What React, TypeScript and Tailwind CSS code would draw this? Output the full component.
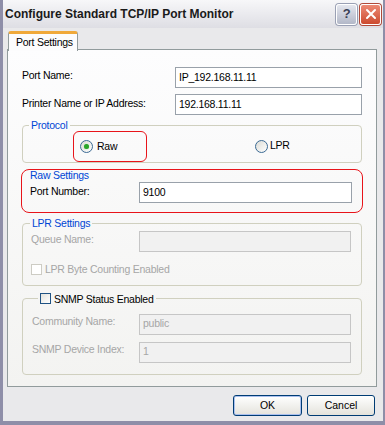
const font = "font-['Liberation_Sans',Arial,sans-serif]";

function Radio({ checked }: { checked?: boolean }) {
  return (
    <span className="flex h-[13px] w-[13px] shrink-0 items-center justify-center rounded-full border border-[#3b6a94] bg-gradient-to-br from-[#dcdcd6] to-white">
      {checked && <span className="h-[5px] w-[5px] rounded-full bg-[#2aa52a] shadow-[0_0_1px_#7fd37f]" />}
    </span>
  );
}

function Check({ disabled }: { disabled?: boolean }) {
  return (
    <span
      className={
        disabled
          ? 'block h-[11px] w-[11px] shrink-0 border border-[#cdccc4] bg-white'
          : 'block h-[11px] w-[11px] shrink-0 border border-[#1f5283] bg-gradient-to-br from-[#e2e2dc] to-white'
      }
    />
  );
}

function Field({ value, disabled, className }: { value?: string; disabled?: boolean; className: string }) {
  return (
    <div
      className={
        (disabled
          ? 'border-[#c6c6c6] bg-[#f1f1f1] text-[#a6a6a6] '
          : 'border-[#99a1aa] bg-white text-black ') +
        'flex h-[21px] items-center border pl-[3px] ' +
        className
      }
    >
      {value}
    </div>
  );
}

export default function App() {
  return (
    <div
      className={`${font} flex h-[425px] w-[385px] flex-col border-b-[4px] border-l-[3px] border-r-[2px] border-[#8e8ea8] bg-[#e9e9eb] text-[10.5px] tracking-[-0.25px] text-black`}
    >
      {/* title bar */}
      <div className="flex h-[28px] shrink-0 items-center bg-gradient-to-b from-[#f7f7f9] to-[#dedee4] pl-[2px] pr-[2px]">
        <span className="flex-1 text-[12px] font-bold tracking-normal text-[#1a1a1a]">
          Configure Standard TCP/IP Port Monitor
        </span>
        <div className="flex h-[21px] w-[21px] items-center justify-center rounded-[3px] border border-white bg-gradient-to-b from-[#e4e6ee] to-[#b3b8c8] text-[13px] font-bold text-[#3a3f55] shadow-[0_0_0_1px_#9aa0b4]">
          ?
        </div>
        <div className="ml-[3px] flex h-[21px] w-[21px] items-center justify-center rounded-[3px] border border-white bg-gradient-to-b from-[#ec8a75] to-[#cc4a2e] shadow-[0_0_0_1px_#b04a3a]">
          <svg width="12" height="12" viewBox="0 0 12 12">
            <path d="M2 2 L10 10 M10 2 L2 10" stroke="white" strokeWidth="2" strokeLinecap="round" />
          </svg>
        </div>
      </div>

      {/* body */}
      <div className="flex flex-1 flex-col pl-[4px] pr-[6px] pt-[3px]">
        <div className="relative z-10 -mb-[2px] ml-[1px] flex h-[20px] w-[70px] items-start rounded-t-[3px] border-x border-t-[3px] border-x-[#919b9c] border-t-[#f0a93a] bg-[#fcfcfd] pl-[7px] pt-[1px]">
          Port Settings
        </div>

        <div className="flex h-[338px] flex-col border border-[#919b9c] bg-gradient-to-b from-[#fdfdfe] to-[#f3f3f1] px-[14px] pt-[17px]">
          <div className="flex items-center">
            <span className="w-[153px] -translate-y-[2px]">Port Name:</span>
            <Field value="IP_192.168.11.11" className="flex-1" />
          </div>
          <div className="mt-[6px] flex items-center">
            <span className="w-[153px] -translate-y-[1px]">Printer Name or IP Address:</span>
            <Field value="192.168.11.11" className="flex-1" />
          </div>

          <fieldset className="mt-[4px] rounded-[4px] border border-[#d0d0bf]">
            <legend className="ml-[6px] px-[2px] leading-[12px] text-[#0046d5]">Protocol</legend>
            <div className="flex">
              <div className="ml-[50px] flex h-[31px] w-[74px] items-center gap-[4px] rounded-[6px] border-[1.5px] border-[#e8141a] pl-[6px]">
                <Radio checked />
                <span>Raw</span>
              </div>
              <div className="ml-[108px] flex items-center gap-[2px] pb-[1px]">
                <Radio />
                <span>LPR</span>
              </div>
            </div>
          </fieldset>

          <div className="-mx-[1px] mt-[6px] flex h-[44px] flex-col rounded-[8px] border-[1.5px] border-[#e8141a] pl-[8px] pr-[10px]">
            <span className="-mt-[1px] leading-[12px] text-[#0046d5]">Raw Settings</span>
            <div className="mt-[1px] flex items-center">
              <span className="w-[109px] -translate-y-[1px]">Port Number:</span>
              <Field value="9100" className="flex-1" />
            </div>
          </div>

          <fieldset className="mt-[4px] rounded-[4px] border border-[#d0d0bf] pb-[7px] pl-[8px] pr-[10px]">
            <legend className="-ml-[1px] px-[2px] leading-[12px] text-[#0046d5]">LPR Settings</legend>
            <div className="mt-[2px] flex items-center text-[#a6a6a6]">
              <span className="w-[108px] -translate-y-[2px]">Queue Name:</span>
              <Field disabled className="flex-1" />
            </div>
            <div className="mt-[10px] flex items-center gap-[3px] text-[#a6a6a6]">
              <Check disabled />
              <span>LPR Byte Counting Enabled</span>
            </div>
          </fieldset>

          <fieldset className="mt-[7px] rounded-[4px] border border-[#d0d0bf] pb-[11px] pl-[9px] pr-[10px]">
            <legend className="ml-[6px] flex items-center gap-[3px] px-[2px] leading-[12px]">
              <Check />
              <span>SNMP Status Enabled</span>
            </legend>
            <div className="mt-[9px] flex items-center text-[#a6a6a6]">
              <span className="w-[107px] -translate-y-[2px]">Community Name:</span>
              <Field disabled value="public" className="flex-1" />
            </div>
            <div className="mt-[7px] flex items-center text-[#a6a6a6]">
              <span className="w-[107px] -translate-y-[2px]">SNMP Device Index:</span>
              <Field disabled value="1" className="flex-1" />
            </div>
          </fieldset>
        </div>

        <div className="mt-[8px] flex justify-end gap-[5px] pr-[2px]">
          <button className="flex h-[21px] w-[69px] items-center justify-center rounded-[3px] border border-[#003c74] bg-gradient-to-b from-white to-[#e4e3dc] tracking-normal shadow-[inset_0_0_0_1px_#aac0ee]">
            OK
          </button>
          <button className="flex h-[21px] w-[68px] items-center justify-center rounded-[3px] border border-[#003c74] bg-gradient-to-b from-white to-[#e4e3dc] tracking-normal">
            Cancel
          </button>
        </div>
      </div>
    </div>
  );
}
